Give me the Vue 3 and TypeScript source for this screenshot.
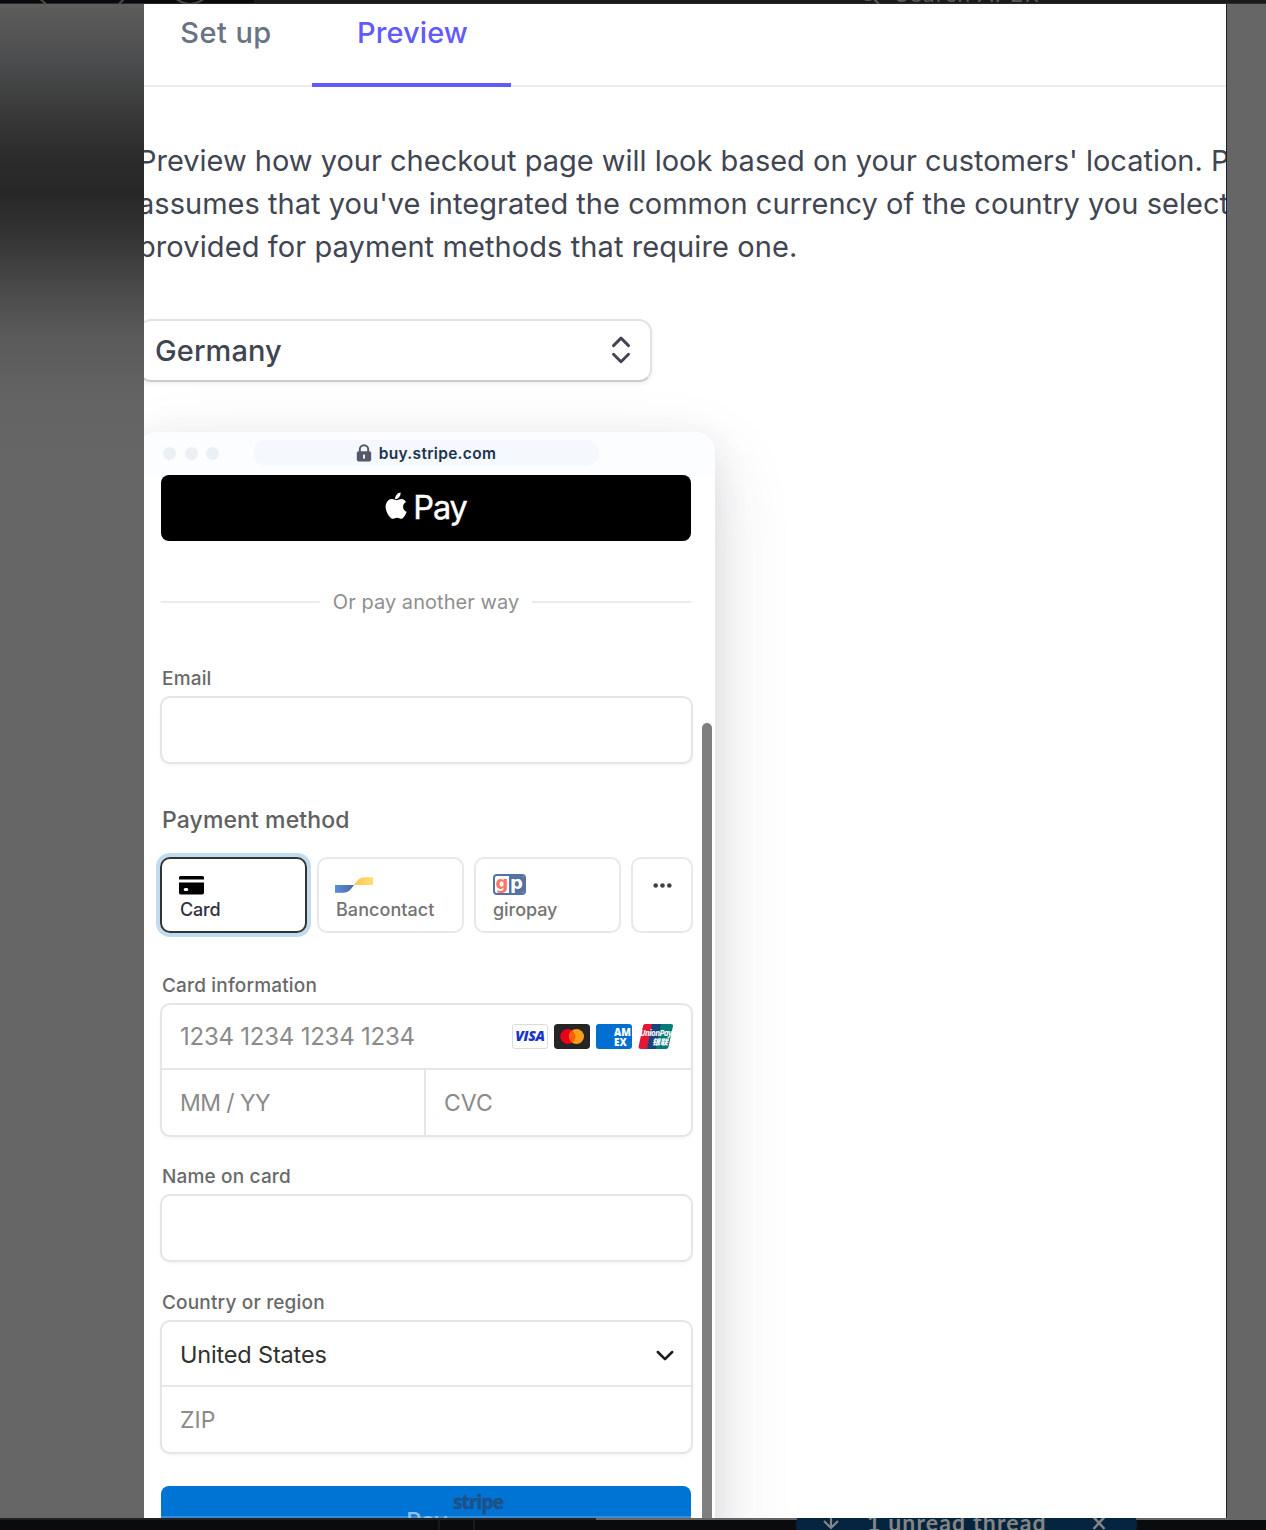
<script setup lang="ts">
interface Method {
  id: string
  label: string
  active?: boolean
}

const methods: Method[] = [
  { id: 'card', label: 'Card', active: true },
  { id: 'bancontact', label: 'Bancontact' },
  { id: 'giropay', label: 'giropay' },
]
</script>

<template>
  <div class="screen">
    <div class="topbar">
      <svg class="topbar-icons" width="220" height="4" viewBox="0 0 220 4" fill="none" stroke="#4a4a4a" stroke-width="2">
        <path d="M39-2 46 4M125-2 119 4M175-2Q190 10 205-2" />
      </svg>
      <div class="topbar-search">
        <svg width="22" height="20" viewBox="0 0 22 20" fill="none" stroke="#5a5a5a" stroke-width="2.2">
          <circle cx="9" cy="9" r="7" /><path d="m14 14 6 6" />
        </svg>
        <span>Search APER</span>
      </div>
    </div>

    <div class="middle">
      <div class="shade"></div>
      <main class="panel">
        <nav class="tabs">
          <div class="tab setup">Set up</div>
          <div class="tab current">Preview</div>
        </nav>

        <p class="intro">
          <span class="first">Preview how your checkout page will look based on your customers' location. P</span><br>
          <span>assumes that you've integrated the common currency of the country you select</span><br>
          <span class="last">provided for payment methods that require one.</span>
        </p>

        <div class="country">
          <span>Germany</span>
          <svg width="20" height="28" viewBox="0 0 20 28" fill="none" stroke="#414552" stroke-width="2.9" stroke-linecap="round" stroke-linejoin="round">
            <path d="m2.500 9.600 7.500-7.500 7.500 7.500M2.500 18.300l7.500 7.500 7.500-7.500" />
          </svg>
        </div>

        <section class="browser">
          <header class="chrome">
            <i class="dot"></i><i class="dot"></i><i class="dot"></i>
            <div class="address">
              <svg width="16" height="18" viewBox="0 0 16 18">
                <path d="M3.800 8V5.400a4.200 4.200 0 0 1 8.400 0V8" fill="none" stroke="#545969" stroke-width="2" />
                <rect x=".8" y="7.300" width="14.400" height="10.200" rx="2" fill="#545969" />
                <rect x="7.100" y="10.500" width="1.900" height="4.200" rx=".6" fill="#f5f8fc" />
              </svg>
              <span>buy.stripe.com</span>
            </div>
          </header>

          <div class="checkout">
            <div class="applepay">
              <svg width="23" height="28" viewBox="0 0 24 29" fill="#fff">
                <path d="M16.300.5c.2 1.900-.5 3.600-1.600 4.900-1.100 1.300-2.700 2.200-4.200 2-.2-1.800.6-3.600 1.600-4.700C13.200 1.400 15 .6 16.300.5Z" />
                <path d="M21.900 10.400c-2 1.200-3 2.800-3 4.900 0 2.400 1.400 4.400 3.700 5.300-.8 2.400-2.100 4.500-3.500 6.200-1.100 1.300-2.300 1.400-3.800.7-2-.9-3.700-.9-5.700 0-1.600.7-2.800.5-4-.9C1.900 22.800-.1 17 .9 12.900c.9-3.600 3.400-5.700 6.300-5.700 1.900 0 3.300 1.200 4.900 1.200 1.500 0 2.900-1.300 5.200-1.300 1.900 0 3.500 1.100 4.600 3.300Z" />
              </svg>
              <span>Pay</span>
            </div>

            <div class="divider"><span>Or pay another way</span></div>

            <div class="label email">Email</div>
            <div class="field"></div>

            <h2>Payment method</h2>
            <div class="methods">
              <div v-for="m in methods" :key="m.id" class="method" :class="{ active: m.active }">
                <svg v-if="m.id === 'card'" class="glyph" width="25" height="19" viewBox="0 0 25 19">
                  <path d="M1.500 0h22A1.500 1.500 0 0 1 25 1.500V3.400H0V1.500A1.500 1.500 0 0 1 1.500 0Z" />
                  <path fill-rule="evenodd" d="M0 6.500h25v10.300a1.700 1.700 0 0 1-1.700 1.700H1.700A1.700 1.700 0 0 1 0 16.800Zm6.200 5.500a1.500 1.500 0 0 0 0 3h1.600a1.500 1.500 0 0 0 0-3Z" />
                </svg>
                <svg v-else-if="m.id === 'bancontact'" class="glyph banc" width="38" height="16" viewBox="0 0 38 16">
                  <defs>
                    <linearGradient id="bblue"><stop stop-color="#5b8ed6" /><stop offset="1" stop-color="#4a68a4" /></linearGradient>
                    <linearGradient id="byellow"><stop stop-color="#ffc35a" /><stop offset="1" stop-color="#ffe070" /></linearGradient>
                  </defs>
                  <path d="M0 8h19c-3.500 4.800-5.500 7.700-11 7.700H0Z" fill="url(#bblue)" />
                  <path d="M19 8c3.500-4.800 5.500-7.700 11-7.700h8V8Z" fill="url(#byellow)" />
                </svg>
                <div v-else class="giro"><b>g</b><b>p</b></div>
                <span>{{ m.label }}</span>
              </div>
              <div class="method more">
                <svg width="19" height="5" viewBox="0 0 19 5" fill="#404040">
                  <circle cx="2.700" cy="2.500" r="2.300" /><circle cx="9.500" cy="2.500" r="2.300" /><circle cx="16.300" cy="2.500" r="2.300" />
                </svg>
              </div>
            </div>

            <div class="label info">Card information</div>
            <div class="group">
              <div class="row">
                <span class="number">1234 1234 1234 1234</span>
                <div class="brands">
                  <div class="brand visa">VISA</div>
                  <svg class="brand" width="36" height="25" viewBox="0 0 36 25">
                    <rect width="36" height="25" rx="3" fill="#252525" />
                    <circle cx="13.800" cy="12.500" r="7.500" fill="#eb001b" />
                    <circle cx="22.500" cy="12.500" r="7.500" fill="#f79e1b" />
                    <path d="M18.150 6.400a7.500 7.500 0 0 1 0 12.200 7.500 7.500 0 0 1 0-12.200Z" fill="#ff5f00" />
                  </svg>
                  <div class="brand amex"><span>AM</span><span>EX</span></div>
                  <div class="brand union">
                    <svg width="36" height="25" viewBox="0 0 36 25">
                      <path d="M7 0h9l-5 25H2Q0 25 .5 23L5 2Q5.500 0 7 0Z" fill="#e21836" />
                      <path d="M14 0h10l-5 25H9Z" fill="#15457c" />
                      <path d="M23 0h10.500Q35.500 0 35 2l-4.500 21q-.5 2-2.500 2H18Z" fill="#007b78" />
                    </svg>
                    <span class="up-name">UnionPay</span>
                    <span class="up-cjk">银联</span>
                  </div>
                </div>
              </div>
              <div class="row split">
                <div class="half"><span class="expiry">MM / YY</span></div>
                <div class="half"><span class="cvc">CVC</span></div>
              </div>
            </div>

            <div class="label name">Name on card</div>
            <div class="field"></div>

            <div class="label region">Country or region</div>
            <div class="group">
              <div class="row">
                <span class="value">United States</span>
                <svg width="18" height="12" viewBox="0 0 18 12" fill="none" stroke="#1a1a1a" stroke-width="2.500" stroke-linecap="round" stroke-linejoin="round">
                  <path d="m1.800 2 7.200 7.200L16.200 2" />
                </svg>
              </div>
              <div class="row zip"><span>ZIP</span></div>
            </div>

            <div class="submit">
              <span class="pay">Pay</span>
              <span class="stripe">stripe</span>
            </div>
          </div>

          <div class="scrollbar"></div>
        </section>
      </main>
    </div>

    <footer class="bottombar">
      <div class="thread">
        <svg class="arrow" width="16" height="16" viewBox="0 0 16 16" fill="none" stroke="#858585" stroke-width="2.200">
          <path d="M8 0v14M1 7l7 7 7-7" />
        </svg>
        <span>1 unread thread</span>
        <svg class="close" width="14" height="14" viewBox="0 0 14 14" fill="none" stroke="#858585" stroke-width="2.500">
          <path d="m1.500 1 11 12M12.500 1l-11 12" />
        </svg>
      </div>
    </footer>
  </div>
</template>

<style>
body {
  margin: 0;
}
</style>

<style scoped>
.screen,
.screen * {
  box-sizing: border-box;
}
.screen {
  display: flex;
  flex-direction: column;
  width: 1266px;
  height: 1530px;
  overflow: hidden;
  background: #666;
  font-family: Inter, "Liberation Sans", sans-serif;
}
.topbar {
  flex: none;
  display: flex;
  justify-content: space-between;
  height: 4px;
  padding-right: 226px;
  overflow: hidden;
  background: linear-gradient(transparent 3px, #2b2b2d 3px), linear-gradient(90deg, #0a0a0c 254px, #1a1a1c 254px);
}
.topbar-search {
  display: flex;
  gap: 15px;
  height: 22px;
  margin-top: -16px;
  color: #5a5a5a;
  font: 23px/22px Lato, sans-serif;
  letter-spacing: 1.3px;
  white-space: nowrap;
}
.topbar-search span {
  margin-top: -2px;
}
.middle {
  flex: none;
  display: flex;
  height: 1514px;
}
.shade {
  flex: none;
  width: 144px;
  background: linear-gradient(#5d5d5b 0, #4c4d4e 58px, #383938 110px, #2a2b2a 155px, #282828 190px, #343434 232px, #484848 280px, #5a5a5a 330px, #636363 390px, #666 460px);
}
.panel {
  flex: none;
  width: 1083px;
  overflow: hidden;
  background: #fff;
  border-right: 1px solid #1f2027;
}
.tabs {
  display: flex;
  height: 83px;
  margin-left: -5px;
  background: linear-gradient(#ebedf2, #ebedf2) 0 81px / 100% 2px no-repeat;
}
.tab {
  padding: 8px 0 0 1px;
  color: #6a7383;
  font-size: 29px;
  font-weight: 500;
  line-height: 41px;
  text-align: center;
}
.setup {
  width: 173px;
  letter-spacing: 0.45px;
}
.current {
  width: 199px;
  padding-left: 2px;
  color: #625afa;
  letter-spacing: 0.1px;
  border-bottom: 4px solid #625afa;
}
.intro {
  margin: 52px 0 0 -6px;
  color: #414552;
  font-size: 29px;
  letter-spacing: 0.03px;
  line-height: 43px;
  white-space: nowrap;
}
.intro .first {
  letter-spacing: -0.005px;
}
.intro .last {
  letter-spacing: 0.09px;
}
.country {
  display: flex;
  align-items: center;
  justify-content: space-between;
  width: 514px;
  height: 63px;
  margin: 51px 0 0 -6px;
  padding: 0 19px 0 15px;
  color: #414552;
  font-size: 29px;
  font-weight: 500;
  letter-spacing: 0.1px;
  background: #fff;
  border: 2px solid #e2e3e5;
  border-bottom-color: #c9cbcd;
  border-radius: 13px;
  box-shadow: 0 2px 4px rgba(60, 66, 87, 0.08);
}
.country svg {
  margin-top: -1px;
}
.browser {
  position: relative;
  width: 578px;
  height: 1200px;
  margin: 50px 0 0 -7px;
  background: #fff;
  border-radius: 20px;
  box-shadow: 0 30px 80px rgba(50, 50, 70, 0.14), 0 10px 34px rgba(50, 50, 70, 0.1);
}
.chrome {
  display: flex;
  align-items: center;
  height: 43px;
  padding: 0 0 1px 26px;
  background: #fcfdfe;
  border-radius: 20px 20px 0 0;
}
.dot {
  width: 13px;
  height: 13px;
  margin-right: 8.500px;
  background: #ebf0f5;
  border-radius: 50%;
}
.address {
  display: flex;
  align-items: center;
  justify-content: center;
  gap: 7px;
  width: 346px;
  height: 26px;
  margin-left: 25.500px;
  color: #1a3350;
  font-size: 15.500px;
  font-weight: 600;
  letter-spacing: 0.3px;
  background: #f5f8fc;
  border-radius: 13px;
}
.checkout {
  width: 533px;
  margin-left: 23px;
}
.applepay {
  display: flex;
  align-items: center;
  justify-content: center;
  gap: 5px;
  width: 530px;
  height: 66px;
  margin-left: 1px;
  color: #fff;
  background: #000;
  border-radius: 8px;
}
.applepay svg {
  margin-top: -4px;
}
.applepay span {
  margin-top: -2px;
  font-size: 32.500px;
  letter-spacing: -1.100px;
  -webkit-text-stroke: 0.400px #fff;
}
.divider {
  display: flex;
  align-items: center;
  gap: 13px;
  width: 530px;
  height: 24px;
  margin: 49px 0 0 1px;
  color: #8f8f8f;
  font-size: 20px;
  letter-spacing: 0.05px;
}
.divider::before,
.divider::after {
  flex: 1;
  height: 2px;
  background: #ebebeb;
  content: "";
}
.label {
  height: 24px;
  margin-bottom: 6px;
  padding: 1px 0 0 2px;
  color: #696969;
  font-size: 19px;
  font-weight: 500;
  letter-spacing: 0.170px;
  line-height: 24px;
}
.email {
  margin-top: 52px;
}
.info {
  margin-top: 40px;
}
.name {
  margin-top: 27px;
}
.region {
  margin-top: 28px;
}
.field,
.group {
  background: #fff;
  border: 2px solid #e5e5e5;
  border-radius: 10px;
  box-shadow: 0 2px 3px rgba(0, 0, 0, 0.04);
}
.field {
  height: 68px;
}
.group {
  height: 134px;
}
h2 {
  height: 30px;
  margin: 41px 0 22px 2px;
  color: #606060;
  font-size: 23px;
  font-weight: 500;
  letter-spacing: 0.1px;
  line-height: 30px;
}
.methods {
  display: flex;
  gap: 10px;
  height: 76px;
}
.method {
  display: flex;
  flex-direction: column;
  width: 147px;
  padding: 15px 0 0 17px;
  color: #737373;
  font-size: 18px;
  font-weight: 500;
  letter-spacing: 0.050px;
  border: 2px solid #e8e8e8;
  border-radius: 10px;
}
.method.active {
  color: #30313d;
  border-color: #333;
  box-shadow: 0 0 0 4px #c0dcee;
}
.method > span {
  margin-top: 3px;
  line-height: 24px;
}
.glyph {
  flex: none;
  margin-top: 2px;
}
.banc {
  margin: 3px 0 2px -1px;
}
.active span {
  margin-left: 1px;
  letter-spacing: -0.200px;
}
.giro {
  display: flex;
  width: 33px;
  height: 21px;
  overflow: hidden;
  background: #fff;
  border: 2px solid #5672a4;
  border-radius: 4px;
  font: 700 18px/13px "DejaVu Sans", sans-serif;
}
.giro b {
  width: 14.500px;
  color: #ff7268;
  text-align: center;
}
.giro b + b {
  width: 16px;
  color: #fff;
  background: #5672a4;
}
.giro + span {
  margin-top: 3px;
  letter-spacing: -0.050px;
}
.method.more {
  flex: 1;
  align-items: center;
  padding: 24px 0 0;
}
.row {
  display: flex;
  align-items: center;
  justify-content: space-between;
  height: 65px;
  padding: 0 17px 0 18px;
  color: #8a8a8a;
  font-size: 24px;
  border-bottom: 2px solid #e6e6e6;
}
.row:last-child {
  height: 65px;
  padding-top: 1px;
  border: 0;
}
.number {
  letter-spacing: -0.230px;
}
.row.split {
  padding: 0;
}
.half {
  display: flex;
  flex: 1;
  align-items: center;
  height: 100%;
  padding-left: 18px;
}
.half:first-child {
  flex: 0 0 264px;
  border-right: 2px solid #e6e6e6;
}
.split.row:last-child {
  padding-top: 0;
}
.split span {
  padding-top: 1px;
}
.expiry {
  font-size: 23px;
  letter-spacing: -0.550px;
}
.cvc {
  font-size: 23px;
}
.zip span {
  font-size: 23px;
}
.value {
  color: #303030;
  font-size: 23.500px;
  letter-spacing: -0.170px;
  padding-top: 1px;
}
.row .value + svg {
  margin-top: 5px;
}
.brands {
  display: flex;
  gap: 6px;
}
.brand {
  flex: none;
  width: 36px;
  height: 25px;
  overflow: hidden;
  border-radius: 3px;
}
.visa {
  color: #1434cb;
  font: italic 800 14px/22px "Open Sans", sans-serif;
  letter-spacing: -0.300px;
  text-align: center;
  border: 1px solid #dcdcdc;
}
.amex {
  padding: 3px 0 0 18px;
  color: #fff;
  background: #016fd0;
  font: 800 10px/10px "Open Sans", sans-serif;
}
.amex span {
  display: block;
  letter-spacing: -0.100px;
}
.union {
  position: relative;
  color: #fff;
}
.union svg {
  display: block;
}
.up-name,
.up-cjk {
  position: absolute;
  white-space: nowrap;
}
.up-name {
  top: 4px;
  left: 2px;
  font: italic 700 8px/9px "Open Sans", sans-serif;
  letter-spacing: -0.550px;
}
.up-cjk {
  top: 13px;
  left: 14px;
  font: italic 900 8px/9px "Noto Sans CJK SC", sans-serif;
}
.submit {
  position: relative;
  width: 530px;
  height: 70px;
  margin: 32px 0 0 1px;
  padding: 17px 0 0 2px;
  color: #8fbfea;
  background: linear-gradient(transparent 30px, #3a8cd8 30px), #0074d4;
  border-radius: 8px;
  font-size: 23.500px;
  font-weight: 500;
  line-height: 36px;
  text-align: center;
}
.stripe {
  position: absolute;
  top: 3px;
  left: 292px;
  color: #1b5288;
  font: 700 19px/26px "Open Sans", sans-serif;
  letter-spacing: -0.900px;
  -webkit-text-stroke: 0.500px #1b5288;
}
.scrollbar {
  position: absolute;
  top: 291px;
  right: 3px;
  width: 10px;
  height: 900px;
  background: #7f7f7f;
  border-radius: 5px;
}
.bottombar {
  flex: none;
  height: 12px;
  padding-left: 796px;
  overflow: hidden;
  background: linear-gradient(90deg, #1f2222 596px, #666 596px) 0 0 / 100% 2px no-repeat, linear-gradient(90deg, transparent 438px, #191a1c 438px 440px, transparent 440px 473px, #191a1c 473px 475px, transparent 475px), #0a0b0d;
}
.thread {
  display: flex;
  width: 341px;
  height: 30px;
  margin-top: -8px;
  padding: 0 31px 0 27px;
  color: #858585;
  background: #04243f;
  border-radius: 14px;
  font: 700 23px/26px Lato, sans-serif;
}
.thread span {
  margin: -1px 0 0 28px;
  white-space: nowrap;
  letter-spacing: 1.150px;
}
.arrow {
  margin-top: 4px;
}
.close {
  margin: 6px 0 0 auto;
}
</style>
